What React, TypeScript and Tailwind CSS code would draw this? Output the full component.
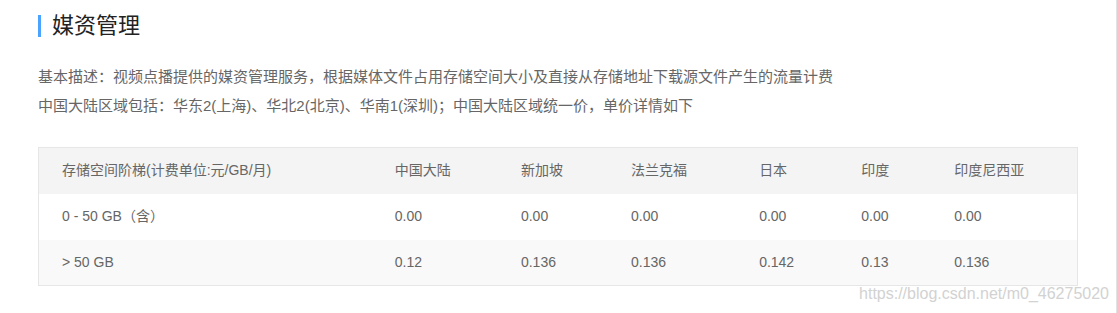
import React from "react";

const headers = ["存储空间阶梯(计费单位:元/GB/月)", "中国大陆", "新加坡", "法兰克福", "日本", "印度", "印度尼西亚"];
const rows = [
  ["0 - 50 GB（含）", "0.00", "0.00", "0.00", "0.00", "0.00", "0.00"],
  ["> 50 GB", "0.12", "0.136", "0.136", "0.142", "0.13", "0.136"],
];
const widths = [333, 126, 110, 128, 102, 93, 146];

export default function App() {
  return (
    <div
      className="relative w-[1117px] h-[313px] bg-white border-r border-[#e2e2e2] pl-[38px] pt-[14px] overflow-hidden"
      style={{ fontFamily: '"Liberation Sans", "Noto Sans CJK SC", sans-serif' }}
    >
      <div className="flex items-center h-[23px]">
        <div className="w-[3px] h-[22px] bg-[#4aa3ff]" />
        <div className="ml-[11px] text-[22px] leading-[23px] text-[#222]">媒资管理</div>
      </div>
      <div className="mt-[25px] text-[15px] leading-[29px] text-[#666]">
        <p>基本描述：视频点播提供的媒资管理服务，根据媒体文件占用存储空间大小及直接从存储地址下载源文件产生的流量计费</p>
        <p>中国大陆区域包括：华东2(上海)、华北2(北京)、华南1(深圳)；中国大陆区域统一价，单价详情如下</p>
      </div>
      <table className="mt-[27px] w-[1040px] table-fixed border-collapse border border-[#e6e6e6] text-[14px] text-[#666]">
        <colgroup>
          {widths.map((w, i) => (
            <col key={i} style={{ width: w }} />
          ))}
        </colgroup>
        <thead>
          <tr className="bg-[#f4f4f4] h-[46px]">
            {headers.map((h, i) => (
              <th key={i} className="px-[23px] text-left font-normal whitespace-nowrap">
                {h}
              </th>
            ))}
          </tr>
        </thead>
        <tbody>
          {rows.map((r, ri) => (
            <tr key={ri} className={ri === 1 ? "bg-[#f9f9f9] h-[46px]" : "bg-white h-[46px]"}>
              {r.map((c, ci) => (
                <td key={ci} className="px-[23px] text-left whitespace-nowrap">
                  {c}
                </td>
              ))}
            </tr>
          ))}
        </tbody>
      </table>
      <div className="absolute right-[7px] top-[284px] text-[16px] leading-[20px] text-[#d2d2d2]">
        https://blog.csdn.net/m0_46275020
      </div>
    </div>
  );
}
